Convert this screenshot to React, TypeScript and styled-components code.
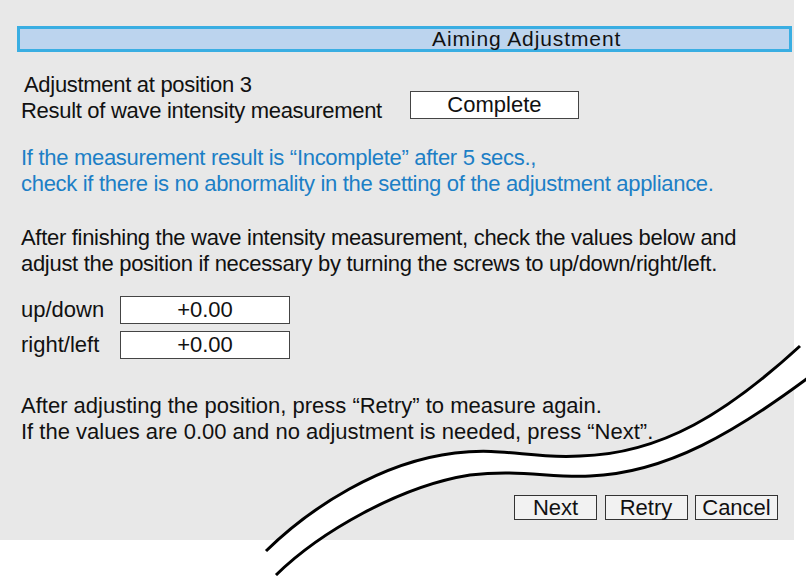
import styled, { createGlobalStyle } from "styled-components";

const GlobalStyle = createGlobalStyle`
  html, body {
    margin: 0;
    padding: 0;
    background: #ffffff;
  }
  body {
    font-family: "Liberation Sans", Arial, sans-serif;
    color: #111111;
  }
`;

const Page = styled.div`
  position: relative;
  width: 806px;
  height: 576px;
  overflow: hidden;
`;

const Panel = styled.div`
  width: 794px;
  height: 540px;
  box-sizing: border-box;
  background: #e8e8e8;
  padding-top: 26px;
  display: flex;
  flex-direction: column;
`;

const TitleBar = styled.div`
  margin-left: 17px;
  width: 775px;
  height: 26px;
  box-sizing: border-box;
  border: 3px solid #3aaee2;
  background: #bcd4ee;
  padding-left: 412px;
  font-size: 21px;
  line-height: 20px;
  letter-spacing: 0.9px;
  color: #111;
`;

const StatusRow = styled.div`
  display: flex;
  align-items: flex-start;
  margin-top: 20px;
  padding-left: 21px;
`;

const StatusText = styled.div`
  font-size: 22px;
  line-height: 26px;
  letter-spacing: -0.3px;
`;

const Indented = styled.div`
  padding-left: 3px;
`;

const ValueBox = styled.div<{ $width: number }>`
  width: ${(p) => p.$width}px;
  height: 28px;
  box-sizing: border-box;
  border: 1px solid #444;
  background: #ffffff;
  font-size: 22px;
  line-height: 26px;
  text-align: center;
`;

const CompleteBox = styled(ValueBox)`
  margin-top: 19px;
  margin-left: 28px;
`;

const Paragraph = styled.p<{ $top: number; $blue?: boolean }>`
  margin: ${(p) => p.$top}px 0 0;
  padding-left: 21px;
  font-size: 22px;
  line-height: 26px;
  letter-spacing: -0.3px;
  color: ${(p) => (p.$blue ? "#1c7fc6" : "#111111")};
`;

const Values = styled.div`
  margin-top: 19px;
  padding-left: 21px;
  display: flex;
  flex-direction: column;
  gap: 7px;
`;

const ValueRow = styled.div`
  display: flex;
  align-items: center;
  height: 28px;
`;

const ValueLabel = styled.span`
  width: 99px;
  font-size: 22px;
  line-height: 26px;
`;

const BottomText = styled(Paragraph)`
  letter-spacing: 0;
`;

const Buttons = styled.div`
  margin-top: 50px;
  margin-right: 16px;
  display: flex;
  justify-content: flex-end;
  gap: 7.5px;
`;

const Button = styled.button`
  width: 83px;
  height: 25px;
  box-sizing: border-box;
  padding: 0;
  border: 1px solid #333;
  border-radius: 0;
  background: #f2f2f2;
  font-family: "Liberation Sans", Arial, sans-serif;
  font-size: 22px;
  line-height: 23px;
  color: #111;
`;

const Wave = styled.svg`
  position: absolute;
  left: 0;
  top: 0;
  pointer-events: none;
`;

const upper =
  "M266,551 C310,508 380,462 455,453 C505,447 530,459 580,456 C662,454 728,412 800,346";
const lower =
  "M276,575 C320,532 400,486 470,475 C520,469 550,478 590,476 C668,473 738,430 808,378";
const band =
  "M266,551 C310,508 380,462 455,453 C505,447 530,459 580,456 C662,454 728,412 800,346 L808,346 L808,378 C738,430 668,473 590,476 C550,478 520,469 470,475 C400,486 320,532 276,575 Z";

const values = [
  { label: "up/down", value: "+0.00" },
  { label: "right/left", value: "+0.00" },
];

export default function App() {
  return (
    <Page>
      <GlobalStyle />
      <Panel>
        <TitleBar>Aiming Adjustment</TitleBar>
        <StatusRow>
          <StatusText>
            <Indented>Adjustment at position 3</Indented>
            <div>Result of wave intensity measurement</div>
          </StatusText>
          <CompleteBox $width={169}>Complete</CompleteBox>
        </StatusRow>
        <Paragraph $top={21} $blue>
          If the measurement result is “Incomplete” after 5 secs.,
          <br />
          check if there is no abnormality in the setting of the adjustment appliance.
        </Paragraph>
        <Paragraph $top={28}>
          After finishing the wave intensity measurement, check the values below and
          <br />
          adjust the position if necessary by turning the screws to up/down/right/left.
        </Paragraph>
        <Values>
          {values.map((v) => (
            <ValueRow key={v.label}>
              <ValueLabel>{v.label}</ValueLabel>
              <ValueBox $width={170}>{v.value}</ValueBox>
            </ValueRow>
          ))}
        </Values>
        <BottomText $top={34}>
          After adjusting the position, press “Retry” to measure again.
          <br />
          If the values are 0.00 and no adjustment is needed, press “Next”.
        </BottomText>
        <Buttons>
          <Button>Next</Button>
          <Button>Retry</Button>
          <Button>Cancel</Button>
        </Buttons>
      </Panel>
      <Wave width="806" height="576" viewBox="0 0 806 576">
        <path d={band} fill="#ffffff" />
        <path d={upper} fill="none" stroke="#000" strokeWidth="3" />
        <path d={lower} fill="none" stroke="#000" strokeWidth="3" />
      </Wave>
    </Page>
  );
}
